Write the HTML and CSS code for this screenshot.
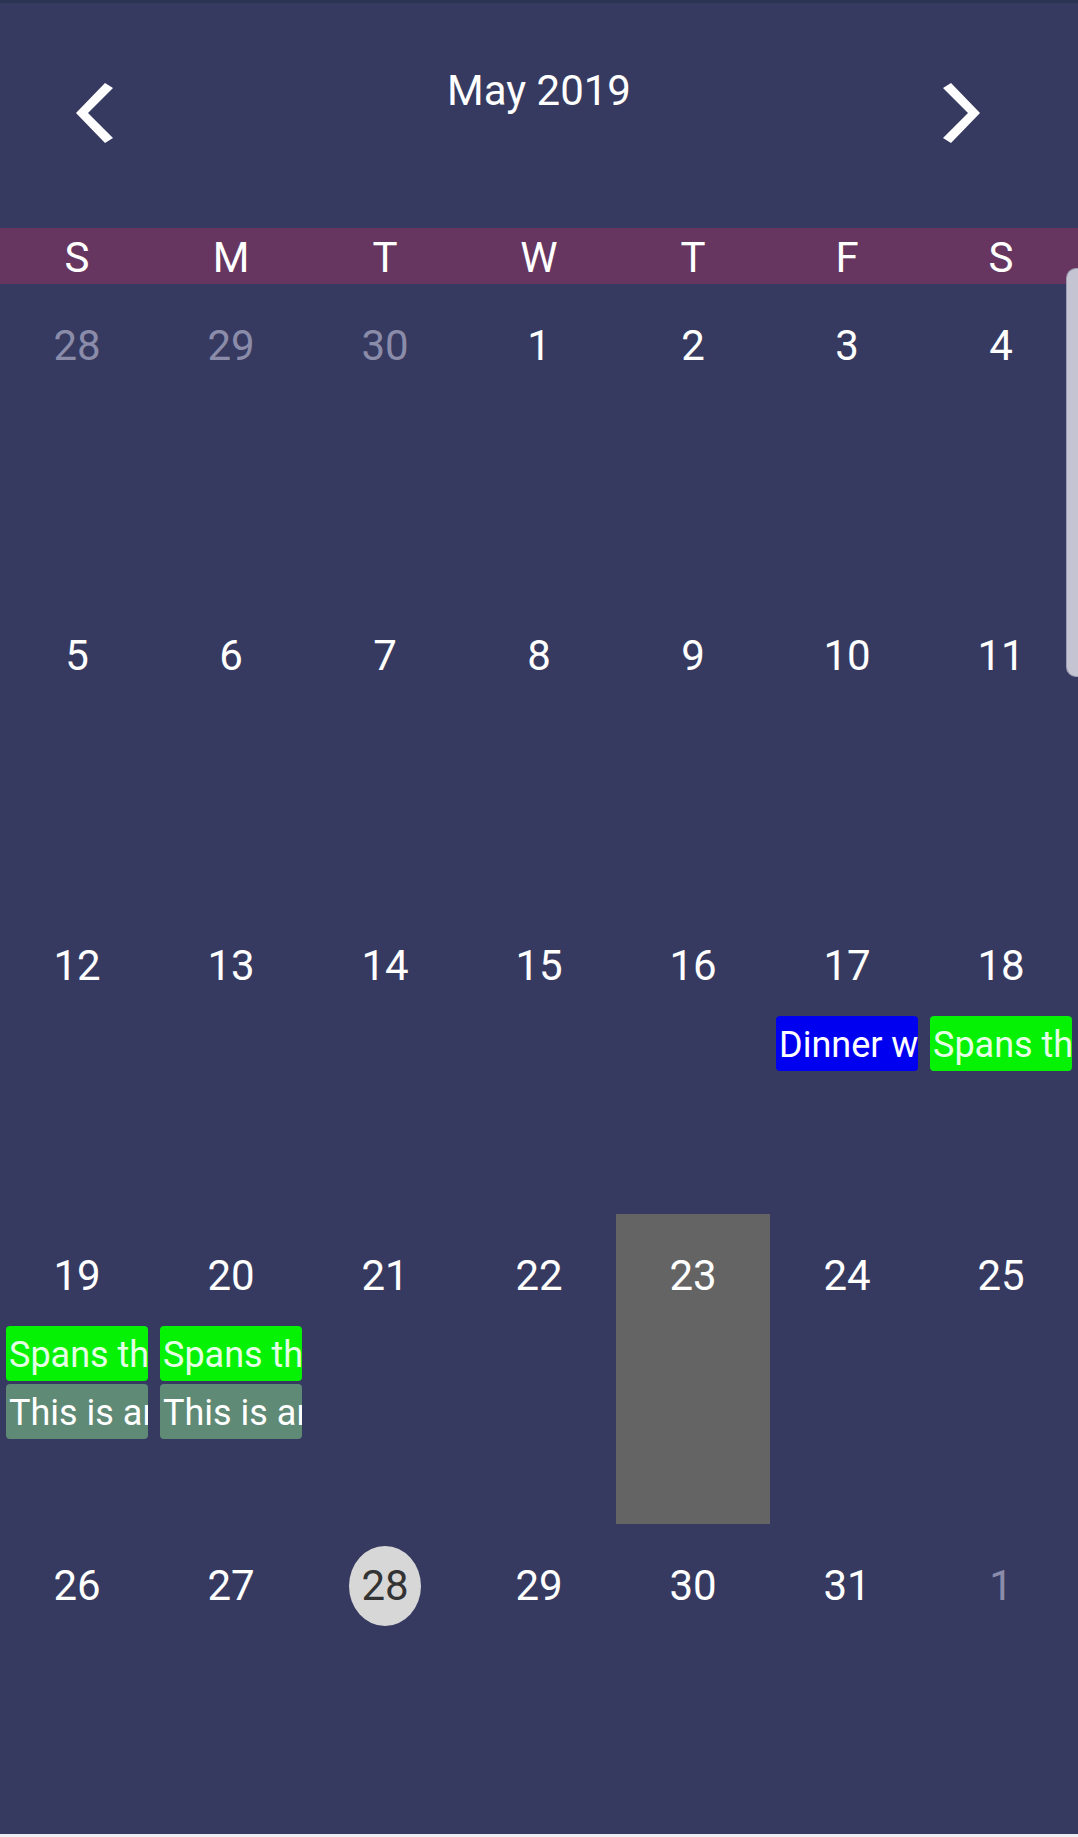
FILE: index.html
```html
<!DOCTYPE html>
<html>
<head>
<meta charset="utf-8">
<title>Calendar</title>
<link rel="stylesheet" href="styles.css">
</head>
<body>
<div class="app">
  <header class="header">
    <button class="nav nav-prev" aria-label="Previous month">
      <svg width="38" height="60" viewBox="0 0 38 60"><polygon points="29,0 37,5 12,30 37,55 29,60 0,30" fill="#ffffff"/></svg>
    </button>
    <div class="title">May 2019</div>
    <button class="nav nav-next" aria-label="Next month">
      <svg width="38" height="60" viewBox="0 0 38 60"><polygon points="9,0 1,5 26,30 1,55 9,60 38,30" fill="#ffffff"/></svg>
    </button>
  </header>
  <div class="weekdays">
    <div>S</div><div>M</div><div>T</div><div>W</div><div>T</div><div>F</div><div>S</div>
  </div>
  <div class="month">
    <div class="cell"><div class="num other">28</div></div>
    <div class="cell"><div class="num other">29</div></div>
    <div class="cell"><div class="num other">30</div></div>
    <div class="cell"><div class="num">1</div></div>
    <div class="cell"><div class="num">2</div></div>
    <div class="cell"><div class="num">3</div></div>
    <div class="cell"><div class="num">4</div></div>

    <div class="cell"><div class="num">5</div></div>
    <div class="cell"><div class="num">6</div></div>
    <div class="cell"><div class="num">7</div></div>
    <div class="cell"><div class="num">8</div></div>
    <div class="cell"><div class="num">9</div></div>
    <div class="cell"><div class="num">10</div></div>
    <div class="cell"><div class="num">11</div></div>

    <div class="cell"><div class="num">12</div></div>
    <div class="cell"><div class="num">13</div></div>
    <div class="cell"><div class="num">14</div></div>
    <div class="cell"><div class="num">15</div></div>
    <div class="cell"><div class="num">16</div></div>
    <div class="cell"><div class="num">17</div><div class="event ev-blue">Dinner with Family</div></div>
    <div class="cell"><div class="num">18</div><div class="event ev-green">Spans three days</div></div>

    <div class="cell"><div class="num">19</div><div class="event ev-green">Spans three days</div><div class="event ev-sage">This is an all day event</div></div>
    <div class="cell"><div class="num">20</div><div class="event ev-green">Spans three days</div><div class="event ev-sage">This is an all day event</div></div>
    <div class="cell"><div class="num">21</div></div>
    <div class="cell"><div class="num">22</div></div>
    <div class="cell selected"><div class="num">23</div></div>
    <div class="cell"><div class="num">24</div></div>
    <div class="cell"><div class="num">25</div></div>

    <div class="cell"><div class="num">26</div></div>
    <div class="cell"><div class="num">27</div></div>
    <div class="cell"><div class="num today">28</div></div>
    <div class="cell"><div class="num">29</div></div>
    <div class="cell"><div class="num">30</div></div>
    <div class="cell"><div class="num">31</div></div>
    <div class="cell"><div class="num other">1</div></div>
  </div>
  <div class="scrollbar"></div>
</div>
</body>
</html>
```

FILE: styles.css
```css
* { box-sizing: border-box; }
html, body {
  margin: 0;
  padding: 0;
}
body {
  background: #373a60;
  font-family: Roboto, "Noto Sans", "Liberation Sans", sans-serif;
  color: #ffffff;
  width: 1078px;
  height: 1837px;
  overflow: hidden;
}
.app {
  position: relative;
  height: 1837px;
  border-bottom: 3px solid #eeeef3;
}
.header {
  height: 228px;
  border-top: 3px solid #2b3553;
  display: grid;
  grid-template-columns: 1fr auto 1fr;
  align-items: start;
}
.nav {
  background: none;
  border: 0;
  padding: 0;
  margin-top: 80px;
  width: 38px;
  height: 60px;
  cursor: pointer;
}
.nav svg { display: block; }
.nav-prev { justify-self: start; margin-left: 76px; }
.nav-next { justify-self: end; margin-right: 98px; }
.title {
  margin-top: 67px;
  font-size: 42px;
  line-height: 42px;
  color: #ffffff;
}
.weekdays {
  height: 56px;
  background: #663660;
  display: grid;
  grid-template-columns: repeat(7, 1fr);
  text-align: center;
  font-size: 42px;
  line-height: 53px;
  padding-top: 3px;
}
.month {
  display: grid;
  grid-template-columns: repeat(7, 1fr);
  grid-auto-rows: 310px;
}
.cell {
  display: flex;
  flex-direction: column;
  align-items: center;
  overflow: hidden;
}
.cell.selected { background: #646464; }
.num {
  margin-top: 22px;
  width: 72px;
  height: 80px;
  line-height: 80px;
  font-size: 42px;
  text-align: center;
  border-radius: 50%;
  color: #ffffff;
}
.num.other { color: #8a8caa; }
.num.today {
  background: #d7d7d7;
  color: #333333;
}
.event {
  align-self: stretch;
  margin: 0 6px 3px;
  height: 55px;
  border-radius: 4px;
  padding: 4px 0 0 3px;
  font-size: 36px;
  line-height: 51px;
  white-space: nowrap;
  overflow: hidden;
  color: #ffffff;
}
.num + .event { margin-top: 10px; }
.ev-blue { background: #0000f0; }
.ev-green { background: #05f205; color: #e4ffe4; }
.ev-sage { background: #5f8a76; }
.scrollbar {
  position: absolute;
  top: 268px;
  right: 0;
  width: 12px;
  height: 409px;
  background: #c4c4d2;
  border: 1px solid #9c9cb4;
  border-right: 0;
  border-radius: 10px 0 0 10px;
}
```
